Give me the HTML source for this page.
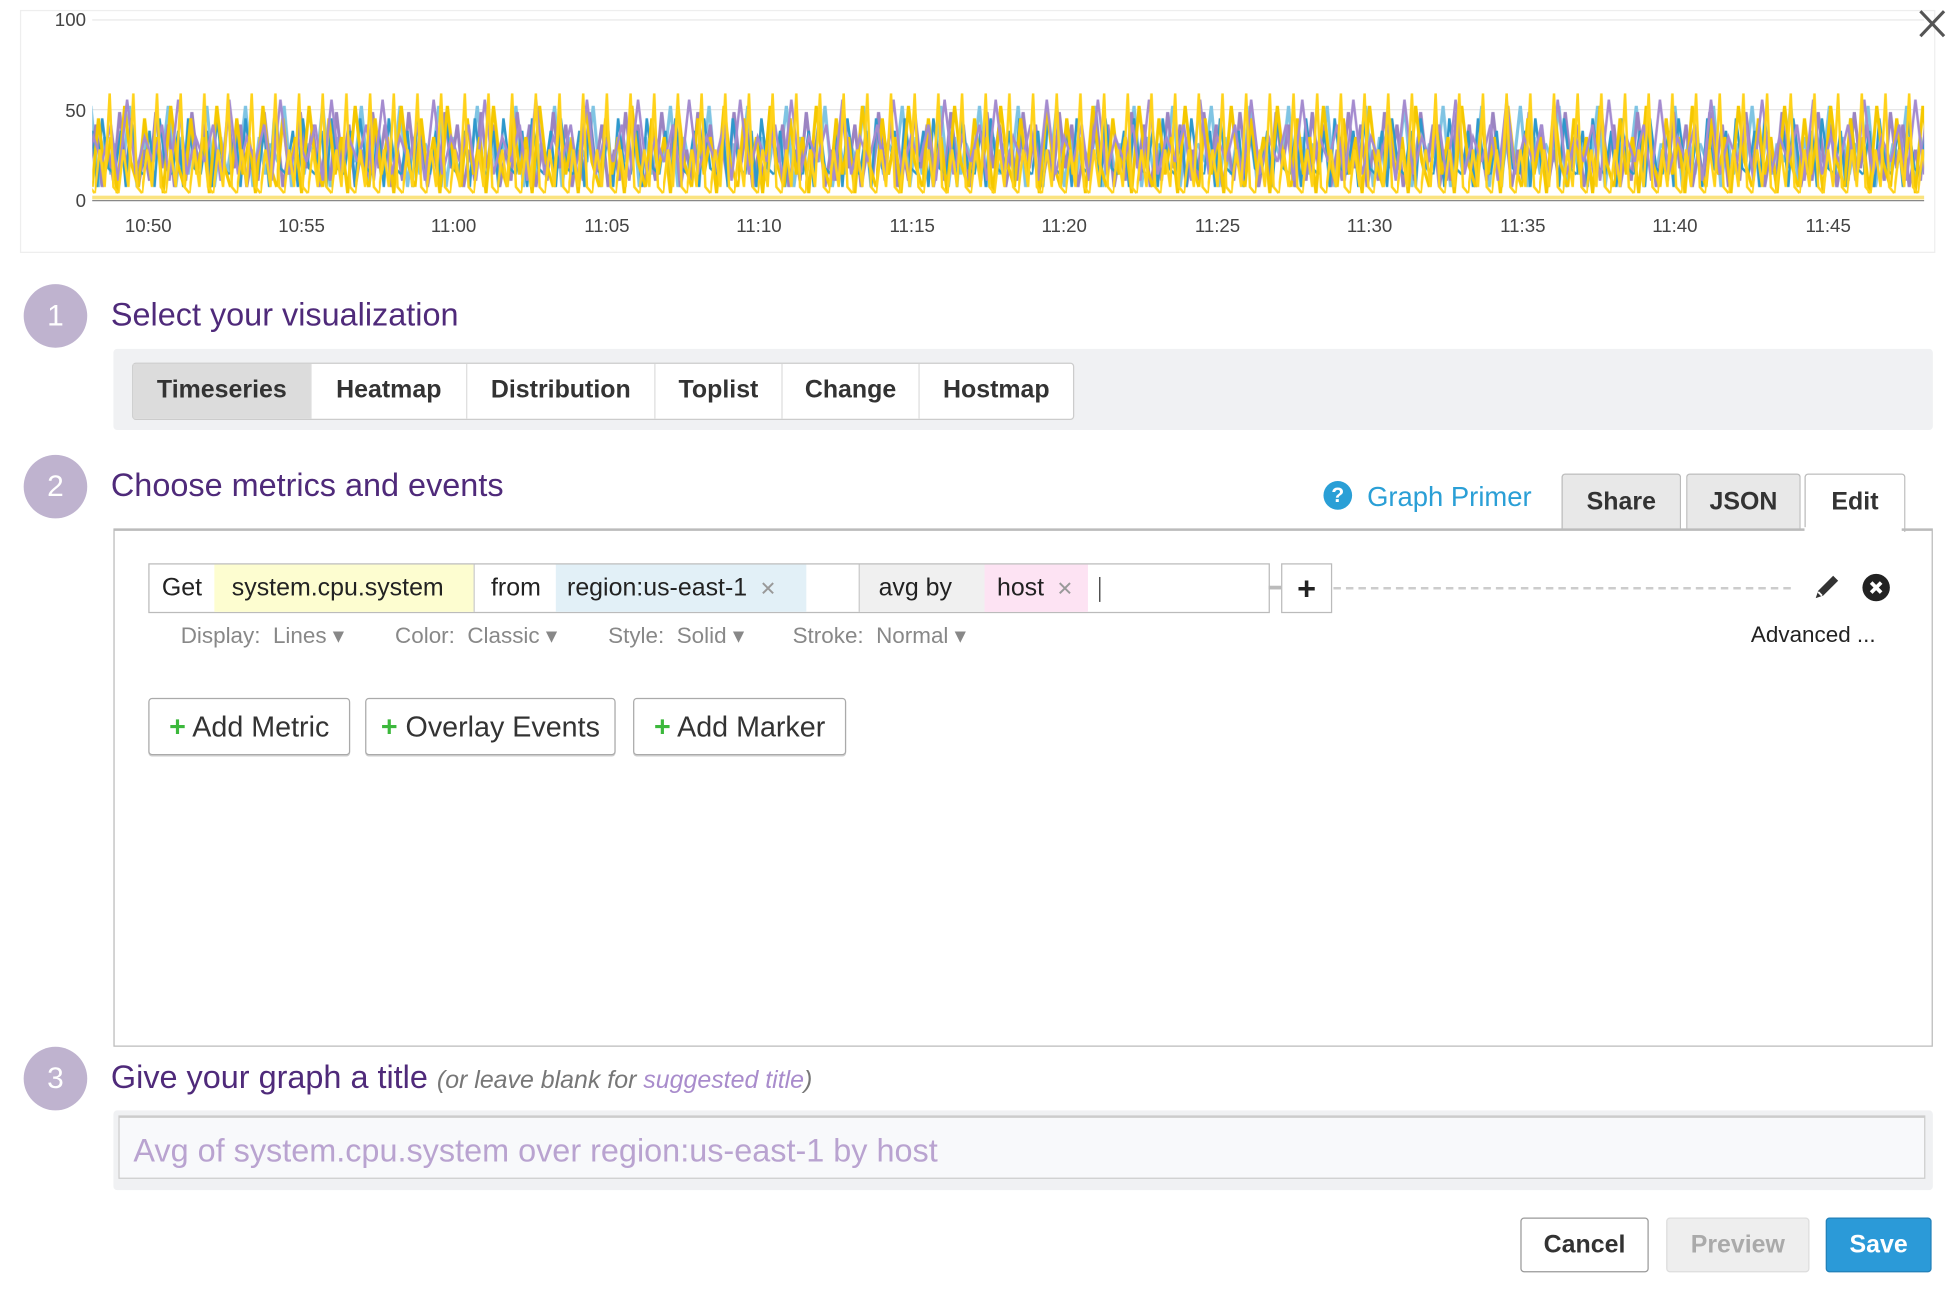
<!DOCTYPE html>
<html><head><meta charset="utf-8"><style>
html,body{margin:0;padding:0;background:#fff;overflow:hidden;width:1954px;height:1292px}
#w{position:absolute;left:0;top:0;width:1568px;height:1037px;transform:scale(1.2462);transform-origin:0 0;font-family:"Liberation Sans",sans-serif}
.a{position:absolute}
.circ{position:absolute;left:19px;width:51px;height:51px;border-radius:50%;background:#bfb3cf;color:#fff;font-size:24px;text-align:center;line-height:51px}
.h{position:absolute;left:89px;font-size:26px;color:#4f2a7a}
.bg{display:flex;position:absolute;left:106px;top:291px;height:44px;border:1px solid #ccc;border-radius:3px;background:#fff}
.bg div{font-weight:bold;font-size:20px;color:#333;line-height:42px;border-right:1px solid #ddd;text-align:center;box-sizing:border-box}
.tab{position:absolute;top:380px;height:44px;border:1px solid #bbb;border-bottom:none;background:#e8e8e8;font-size:20px;font-weight:bold;color:#333;text-align:center;line-height:44px;border-radius:3px 3px 0 0}
.seg{position:absolute;top:0;height:38px;line-height:38px;font-size:20px;color:#222}
.opt{position:absolute;top:500px;font-size:18px;color:#888}
.btn{position:absolute;top:560px;height:44px;border:1px solid #aaa;border-radius:3px;font-size:23px;color:#333;line-height:44px;text-align:center;box-shadow:0 1px 0 #ccc}
.btn b{color:#3cb83c}
.fb{position:absolute;top:977px;height:42px;border-radius:3px;font-size:20px;font-weight:bold;text-align:center;line-height:42px}
</style></head><body><div id="w">
<div class="a" style="left:16px;top:8px;width:1535px;height:193px;border:1px solid #eee"></div>
<svg class="a" style="left:0;top:0" width="1568" height="205">
<defs>
<pattern id="p1" width="37" height="200" patternUnits="userSpaceOnUse"><polyline fill="none" stroke="#f5c800" stroke-width="2.5" points="0,150 5,95 10,140 15,110 20,155 26,85 31,130 37,150"/></pattern>
<pattern id="p2" width="29" height="200" patternUnits="userSpaceOnUse"><polyline fill="none" stroke="#9b84c2" stroke-width="2.5" points="0,120 4,145 9,90 14,135 19,100 24,150 29,120"/></pattern>
<pattern id="p3" width="23" height="200" patternUnits="userSpaceOnUse"><polyline fill="none" stroke="#2f98cc" stroke-width="2" points="0,140 5,105 9,150 13,95 18,135 23,140"/></pattern>
<pattern id="p4" width="31" height="200" patternUnits="userSpaceOnUse"><polyline fill="none" stroke="#7fc4e3" stroke-width="2.5" points="0,115 6,130 11,85 17,150 22,110 27,140 31,115"/></pattern>
<pattern id="p5" width="19" height="200" patternUnits="userSpaceOnUse"><polyline fill="none" stroke="#ffd21a" stroke-width="2" points="0,155 4,120 8,150 12,75 15,150 19,155"/></pattern>
<pattern id="p6" width="41" height="200" patternUnits="userSpaceOnUse"><polyline fill="none" stroke="#a48bcf" stroke-width="2" points="0,130 7,100 13,145 20,80 27,140 34,110 41,130"/></pattern>
</defs>
<line x1="74" y1="16" x2="1544" y2="16" stroke="#e6e6e6"/>
<line x1="74" y1="88" x2="1544" y2="88" stroke="#e6e6e6"/>
<g font-size="15" fill="#444" text-anchor="end"><text x="69" y="21">100</text><text x="69" y="94">50</text><text x="69" y="166">0</text></g>
<rect x="74" y="70" width="1470" height="92" fill="url(#p4)"/>
<rect x="74" y="70" width="1470" height="92" fill="url(#p2)"/>
<rect x="74" y="70" width="1470" height="92" fill="url(#p3)"/>
<rect x="74" y="70" width="1470" height="92" fill="url(#p1)"/>
<rect x="74" y="70" width="1470" height="92" fill="url(#p6)"/>
<rect x="74" y="70" width="1470" height="92" fill="url(#p5)"/>
<rect x="74" y="157" width="1470" height="3" fill="#f5c800" opacity=".5"/>
<line x1="74" y1="161" x2="1544" y2="161" stroke="#888"/>
<g font-size="15" fill="#444" text-anchor="middle">
<text x="119" y="186">10:50</text><text x="242" y="186">10:55</text><text x="364" y="186">11:00</text><text x="487" y="186">11:05</text><text x="609" y="186">11:10</text><text x="732" y="186">11:15</text><text x="854" y="186">11:20</text><text x="977" y="186">11:25</text><text x="1099" y="186">11:30</text><text x="1222" y="186">11:35</text><text x="1344" y="186">11:40</text><text x="1467" y="186">11:45</text></g>
<path d="M1541 9 L1560 29 M1560 9 L1541 29" stroke="#555" stroke-width="2.5"/>
</svg>

<div class="circ" style="top:228px">1</div>
<div class="h" style="top:237px">Select your visualization</div>
<div class="a" style="left:91px;top:280px;width:1460px;height:65px;background:#f0f1f3;border-radius:3px"></div>
<div class="bg"><div style="background:#dcdcdc;width:143px">Timeseries</div><div style="width:125px">Heatmap</div><div style="width:151px">Distribution</div><div style="width:102px">Toplist</div><div style="width:110px">Change</div><div style="border:none;width:123px">Hostmap</div></div>

<div class="circ" style="top:365px">2</div>
<div class="h" style="top:374px">Choose metrics and events</div>
<div class="a" style="left:1062px;top:386px;width:23px;height:23px;border-radius:50%;background:#2a9fd6;color:#fff;font-weight:bold;font-size:17px;text-align:center;line-height:23px">?</div>
<div class="a" style="left:1097px;top:386px;font-size:22px;color:#2a9fd6">Graph Primer</div>
<div class="tab" style="left:1253px;width:94px">Share</div>
<div class="tab" style="left:1353px;width:90px">JSON</div>
<div class="tab" style="left:1448px;width:79px;background:#fff;height:46px">Edit</div>
<div class="a" style="left:91px;top:424px;width:1458px;height:413px;border:1px solid #bbb;border-top:2px solid #bbb"></div>
<div class="a" style="left:1448px;top:423px;width:78px;height:4px;background:#fff"></div>

<div class="a" style="left:119px;top:452px;width:898px;height:38px;border:1px solid #bbb;background:#fff">
<div class="seg" style="left:0;width:52px;text-align:center">Get</div>
<div class="seg" style="left:52px;width:208px;background:#fdfdd0;padding-left:14px;box-sizing:border-box">system.cpu.system</div>
<div class="seg" style="left:260px;width:66px;text-align:center;border-left:1px solid #ccc">from</div>
<div class="seg" style="left:326px;width:201px;background:#e2f0f7;padding-left:9px;box-sizing:border-box">region:us-east-1 <span style="color:#999;font-size:16px">&nbsp;✕</span></div>
<div class="seg" style="left:569px;width:101px;background:#f0f0f0;border-left:1px solid #ccc;padding-left:15px;box-sizing:border-box">avg by</div>
<div class="seg" style="left:670px;width:83px;background:#fde3f3;padding-left:10px;box-sizing:border-box">host <span style="color:#999;font-size:16px">&nbsp;✕</span></div>
<div class="a" style="left:762px;top:10px;width:1px;height:20px;background:#333"></div>
</div>
<div class="a" style="left:1018px;top:470px;width:10px;height:3px;background:#bbb"></div>
<div class="a" style="left:1028px;top:452px;width:39px;height:38px;border:1px solid #bbb;text-align:center;line-height:38px;font-size:26px;font-weight:bold;color:#222">+</div>
<div class="a" style="left:1070px;top:471px;width:367px;border-top:2px dashed #ccc"></div>
<svg class="a" style="left:1454px;top:459px" width="24" height="24"><path d="M3 21 L5 15 L17 3 L21 7 L9 19 Z" fill="#333"/><path d="M5 16 L8 19" stroke="#fff" stroke-width="1.5"/></svg>
<svg class="a" style="left:1494px;top:460px" width="23" height="23"><circle cx="11.5" cy="11.5" r="11" fill="#222"/><path d="M7.5 7.5 L15.5 15.5 M15.5 7.5 L7.5 15.5" stroke="#fff" stroke-width="3"/></svg>
<div class="a" style="left:1405px;top:499px;font-size:18px;color:#222">Advanced ...</div>
<div class="opt" style="left:145px">Display: &nbsp;Lines ▾</div>
<div class="opt" style="left:317px">Color: &nbsp;Classic ▾</div>
<div class="opt" style="left:488px">Style: &nbsp;Solid ▾</div>
<div class="opt" style="left:636px">Stroke: &nbsp;Normal ▾</div>
<div class="btn" style="left:119px;width:160px"><b>+</b> Add Metric</div>
<div class="btn" style="left:293px;width:199px"><b>+</b> Overlay Events</div>
<div class="btn" style="left:508px;width:169px"><b>+</b> Add Marker</div>

<div class="circ" style="top:840px">3</div>
<div class="h" style="top:849px">Give your graph a title <i style="font-size:20px;color:#777">(or leave blank for <span style="color:#a98ccc">suggested title</span>)</i></div>
<div class="a" style="left:91px;top:891px;width:1460px;height:64px;background:#f0f1f3;border-radius:3px"></div>
<div class="a" style="left:95px;top:895px;width:1450px;height:51px;background:#f8f9fb;border:1px solid #ccc;border-top:2px solid #ccc;font-size:26px;color:#b9a3d0;line-height:52px;padding-left:11px;box-sizing:border-box">Avg of system.cpu.system over region:us-east-1 by host</div>

<div class="fb" style="left:1220px;width:101px;border:1px solid #999;color:#333;background:#fff">Cancel</div>
<div class="fb" style="left:1337px;width:113px;border:1px solid #ddd;color:#aaa;background:#eee">Preview</div>
<div class="fb" style="left:1465px;width:83px;color:#fff;background:#2b9ad8;border:1px solid #2280b8">Save</div>
</div></body></html>
